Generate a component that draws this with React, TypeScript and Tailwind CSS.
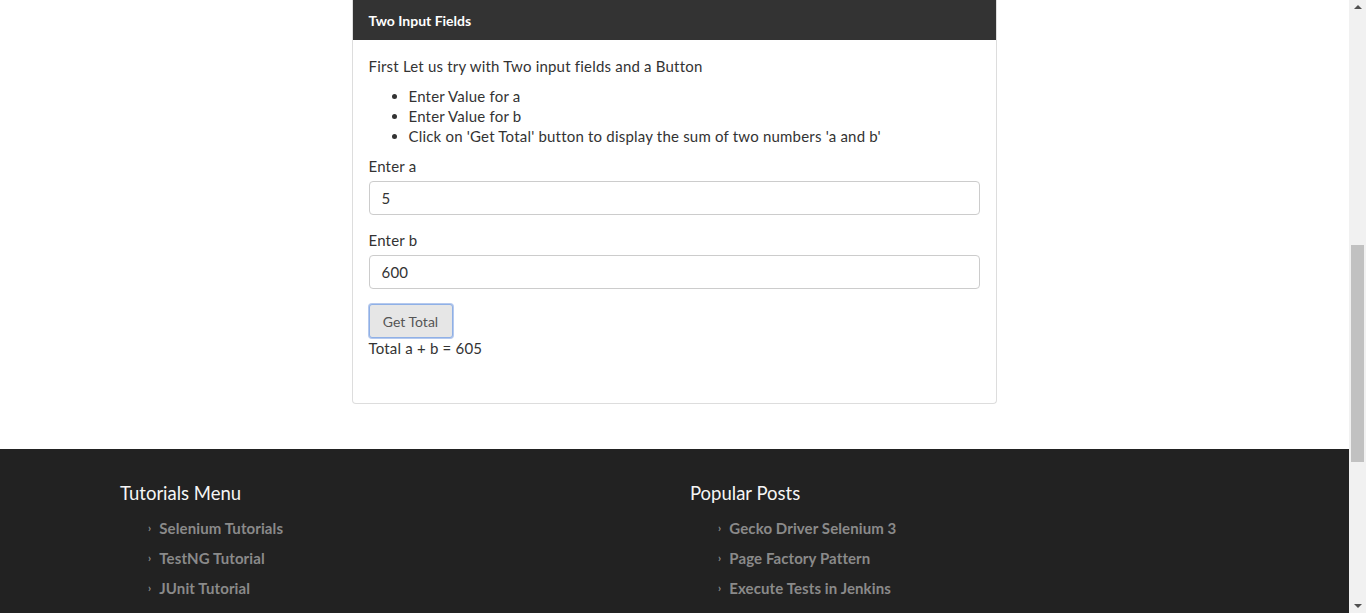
import React from 'react'

const tutorials = ['Selenium Tutorials', 'TestNG Tutorial', 'JUnit Tutorial']
const posts = ['Gecko Driver Selenium 3', 'Page Factory Pattern', 'Execute Tests in Jenkins']

function FooterColumn({ title, links }: { title: string; links: string[] }) {
  return (
    <div className="w-[570px]">
      <h3 className="text-[18.5px] leading-[26px] text-[#f5f5f5]">{title}</h3>
      <ul className="mt-[7px] pl-[28px]">
        {links.map((l) => (
          <li key={l} className="flex h-[30px] items-center gap-[8px] text-[15px] font-bold tracking-[0.1px] text-[#8a8a8a]">
            <span className="text-[11px]">›</span>
            <span>{l}</span>
          </li>
        ))}
      </ul>
    </div>
  )
}

export default function App() {
  return (
    <div className="flex h-[613px] w-[1366px] overflow-hidden font-['Lato',sans-serif] text-[#333]">
      <div className="flex w-[1349px] flex-col">
        <div className="flex h-[449px] justify-center pr-[1px]">
          <div className="mb-[45px] flex w-[645px] flex-col rounded-b-[4px] border border-t-0 border-[#ddd] bg-white">
            <div className="flex h-[40px] items-center bg-[#333] px-[16px] text-[14px] font-bold text-white">
              Two Input Fields
            </div>
            <div className="flex flex-col px-[16px] pt-[16px] text-[15px] tracking-[0.2px]">
              <p className="leading-[20px]">First Let us try with Two input fields and a Button</p>
              <ul className="mt-[10px] list-disc pl-[40px] leading-[20px]">
                <li>Enter Value for a</li>
                <li>Enter Value for b</li>
                <li>Click on 'Get Total' button to display the sum of two numbers 'a and b'</li>
              </ul>
              <label className="mt-[10px] leading-[20px]">Enter a</label>
              <div className="mt-[5px] flex h-[34px] items-center rounded-[4px] border border-[#ccc] px-[12px]">5</div>
              <label className="mt-[15px] leading-[20px]">Enter b</label>
              <div className="mt-[5px] flex h-[34px] items-center rounded-[4px] border border-[#ccc] px-[12px]">600</div>
              <div className="mt-[15px] flex">
                <button className="h-[34px] w-[84px] rounded-[3px] border border-[#8fb0e6] bg-[#e6e6e6] text-[14px] font-normal tracking-normal text-[#555] shadow-[0_0_0_1px_#b5c9ee]">
                  Get Total
                </button>
              </div>
              <p className="leading-[20px]">Total a + b = 605</p>
            </div>
          </div>
        </div>
        <footer className="flex flex-1 bg-[#222] pl-[120px] pt-[31px]">
          <FooterColumn title="Tutorials Menu" links={tutorials} />
          <FooterColumn title="Popular Posts" links={posts} />
        </footer>
      </div>
      <div className="flex w-[17px] flex-col items-center bg-[#f1f1f1]">
        <div className="mt-[5px] h-0 w-0 border-x-[4px] border-b-[4px] border-x-transparent border-b-[#505050]" />
        <div className="mt-[236px] h-[217px] w-[13px] bg-[#c1c1c1]" />
        <div className="flex-1" />
        <div className="mb-[5px] h-0 w-0 border-x-[4px] border-t-[4px] border-x-transparent border-t-[#505050]" />
      </div>
    </div>
  )
}
